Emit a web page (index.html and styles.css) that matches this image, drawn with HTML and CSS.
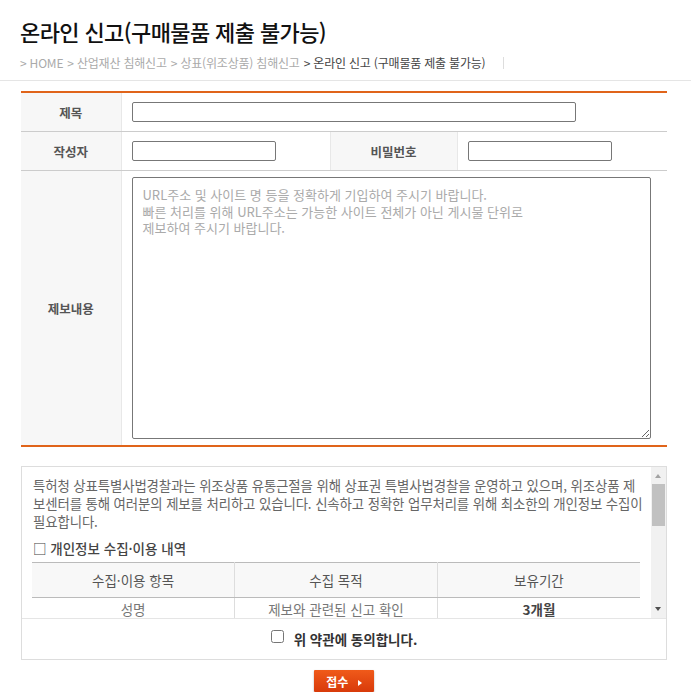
FILE: index.html
```html
<!DOCTYPE html>
<html lang="ko">
<head>
  <meta charset="UTF-8" />
  <title>온라인 신고(구매물품 제출 불가능)</title>
  <link rel="stylesheet" href="styles.css">
</head>
<body>

  <div class="page-head">
    <h1>온라인 신고(구매물품 제출 불가능)</h1>
    <div class="location">
      <span>&gt; HOME</span>
      <span>&gt; 산업재산 침해신고</span>
      <span>&gt; 상표(위조상품) 침해신고</span>
      <span class="current">&gt; 온라인 신고 (구매물품 제출 불가능)</span>
      <span class="bar"></span>
    </div>
  </div>

  <div class="content">
    <table class="write">
      <colgroup>
        <col style="width:100px">
        <col style="width:209px">
        <col style="width:127px">
        <col>
      </colgroup>
      <tr>
        <th>제목</th>
        <td colspan="3"><input type="text" class="w-title"></td>
      </tr>
      <tr>
        <th>작성자</th>
        <td><input type="text" class="w-short"></td>
        <th>비밀번호</th>
        <td><input type="password" class="w-short"></td>
      </tr>
      <tr>
        <th>제보내용</th>
        <td colspan="3">
          <textarea placeholder="URL주소 및 사이트 명 등을 정확하게 기입하여 주시기 바랍니다.&#10;빠른 처리를 위해 URL주소는 가능한 사이트 전체가 아닌 게시물 단위로&#10;제보하여 주시기 바랍니다."></textarea>
        </td>
      </tr>
    </table>

    <div class="agree-box">
      <div class="agree-view">
        <div class="agree-scroll">
          <p>특허청 상표특별사법경찰과는 위조상품 유통근절을 위해 상표권 특별사법경찰을 운영하고 있으며, 위조상품 제<br>보센터를 통해 여러분의 제보를 처리하고 있습니다. 신속하고 정확한 업무처리를 위해 최소한의 개인정보 수집이<br>필요합니다.</p>
          <h4>□ 개인정보 수집·이용 내역</h4>
          <table class="info">
            <tr>
              <th>수집·이용 항목</th>
              <th>수집 목적</th>
              <th>보유기간</th>
            </tr>
            <tr>
              <td>성명</td>
              <td>제보와 관련된 신고 확인</td>
              <td><strong>3개월</strong></td>
            </tr>
            <tr>
              <td>연락처</td>
              <td>제보 내용 확인 및 결과 통보</td>
              <td><strong>3개월</strong></td>
            </tr>
          </table>
        </div>
        <div class="sbar" aria-hidden="true">
          <span class="sbar-btn up"></span>
          <span class="sbar-thumb"></span>
          <span class="sbar-track"></span>
          <span class="sbar-btn down"></span>
        </div>
      </div>
      <label class="agree-check">
        <input type="checkbox"> 위 약관에 동의합니다.
      </label>
    </div>

    <div class="btns">
      <button type="button" class="btn-submit">접수 <span class="arr"></span></button>
    </div>
  </div>

</body>
</html>
```

FILE: styles.css
```css
body {
  margin: 0;
  background: #fff;
  font-family: "Noto Sans CJK KR", "Noto Sans", sans-serif;
  color: #333;
  font-size: 12px;
}

.page-head {
  padding: 14px 0 0 20px;
  border-bottom: 1px solid #e5e5e5;
  height: 81px;
  box-sizing: border-box;
}

h1 {
  margin: 0;
  font-size: 22px;
  font-weight: 500;
  letter-spacing: -0.6px;
  line-height: 34px;
  color: #111;
}

.location {
  display: flex;
  align-items: center;
  gap: 4px;
  margin-top: 7px;
  font-size: 12px;
  color: #aaa;
  letter-spacing: -0.2px;
  line-height: 16px;
}
.location .current {
  color: #444;
}
.location .bar {
  width: 1px;
  height: 12px;
  background: #ddd;
  margin-left: 14px;
}

.content {
  padding: 10px 24px 0 21px;
}

.write {
  width: 100%;
  border-collapse: collapse;
  border-top: 2px solid #e0641a;
  border-bottom: 2px solid #e0641a;
}
.write th {
  background: #f7f7f7;
  font-size: 12.5px;
  color: #555;
  font-weight: 700;
  border-bottom: 1px solid #ccc;
  height: 38px;
  padding: 0;
}
.write th + td,
.write td + th {
  border-left: 1px solid #e8e8e8;
}
.write td {
  border-bottom: 1px solid #ccc;
  padding: 0 10px;
}
.write tr:last-child th,
.write tr:last-child td {
  border-bottom: 0;
}
.write input {
  height: 20px;
  box-sizing: border-box;
  border: 1px solid #777;
  border-radius: 2px;
  display: block;
}
.w-title {
  width: 444px;
}
.w-short {
  width: 144px;
}
.write textarea {
  display: block;
  width: 519px;
  height: 262px;
  box-sizing: border-box;
  margin: 6px 0;
  border: 1px solid #777;
  border-radius: 2px;
  padding: 9px 10px;
  font-family: inherit;
  font-size: 13px;
  line-height: 16.5px;
  color: #333;
}
.write textarea::placeholder {
  color: #aaa;
}

.agree-box {
  margin-top: 19px;
  border: 1px solid #ddd;
}
.agree-view {
  display: flex;
  height: 151px;
  border-bottom: 1px solid #e5e5e5;
}
.agree-scroll {
  flex: 1;
  overflow: hidden;
  padding: 9px 1px 0 11px;
}
.agree-scroll p {
  margin: 0;
  font-size: 13.4px;
  letter-spacing: -0.1px;
  line-height: 18px;
  color: #666;
  white-space: nowrap;
}
.agree-scroll h4 {
  margin: 8px 0 4px;
  font-size: 13.5px;
  font-weight: 500;
  color: #444;
}
.info {
  width: 608px;
  margin-left: -1px;
  table-layout: fixed;
  border-collapse: collapse;
  border-top: 1px solid #bbb;
}
.info th {
  height: 34px;
  padding: 0;
  background: #f8f8f8;
  font-weight: 400;
  font-size: 13.5px;
  color: #555;
  border-bottom: 1px solid #bbb;
}
.info td {
  padding: 1px 0 10px;
  text-align: center;
  font-size: 13.5px;
  color: #777;
  border-bottom: 1px solid #ddd;
}
.info th + th,
.info td + td {
  border-left: 1px solid #ddd;
}
.info strong {
  color: #444;
}

/* fake scrollbar of the terms box */
.sbar {
  width: 15px;
  display: flex;
  flex-direction: column;
  background: #f1f1f1;
}
.sbar-btn {
  height: 17px;
  position: relative;
}
.sbar-btn::after {
  content: "";
  position: absolute;
  left: 4px;
  border-left: 3.5px solid transparent;
  border-right: 3.5px solid transparent;
}
.sbar-btn.up::after {
  top: 7px;
  border-bottom: 4px solid #a3a3a3;
}
.sbar-btn.down::after {
  top: 6px;
  border-top: 4px solid #505050;
}
.sbar-thumb {
  height: 42px;
  margin: 0 1px;
  background: #c1c1c1;
}
.sbar-track {
  flex: 1;
}

.agree-check {
  display: flex;
  justify-content: center;
  align-items: center;
  gap: 6px;
  height: 40px;
  font-size: 13.5px;
  font-weight: 700;
  color: #333;
}
.agree-check input {
  margin: 0 4px 5px 0;
  width: 13px;
  height: 13px;
}

.btns {
  text-align: center;
  padding-top: 10px;
}
.btn-submit {
  width: 60px;
  height: 22px;
  border: 0;
  border-radius: 1px;
  background: linear-gradient(#f05a1a, #d83a0a);
  box-shadow: 0 1px 2px rgba(0, 0, 0, 0.35);
  color: #fff;
  font-family: inherit;
  font-size: 12px;
  font-weight: 700;
  padding: 0;
  cursor: pointer;
}
.btn-submit .arr {
  display: inline-block;
  margin-left: 6px;
  border-left: 4px solid #fff;
  border-top: 3px solid transparent;
  border-bottom: 3px solid transparent;
  vertical-align: 1px;
}
```
